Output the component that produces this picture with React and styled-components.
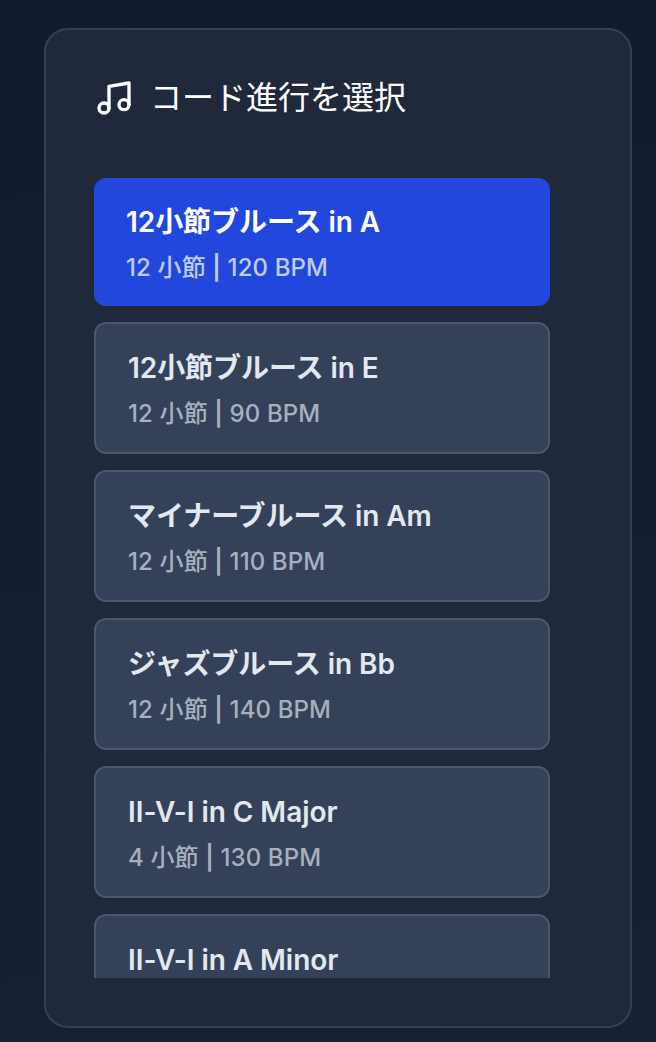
import React from 'react'
import styled, { createGlobalStyle } from 'styled-components'
import { Music } from 'lucide-react'

const GlobalStyle = createGlobalStyle`
  html, body { margin: 0; padding: 0; }
  body {
    background: linear-gradient(175deg, #121a2f 0%, #182034 100%);
    font-family: Inter, "Noto Sans CJK JP", sans-serif;
  }
`

const Page = styled.div`
  width: 656px;
  height: 1042px;
  box-sizing: border-box;
  padding: 28px 24px 14px 44px;
  overflow: hidden;
`

const Panel = styled.section`
  box-sizing: border-box;
  width: 588px;
  height: 1000px;
  padding: 48px 80px 48px 48px;
  display: flex;
  flex-direction: column;
  background: #20293b;
  border: 2px solid #334155;
  border-radius: 24px;
`

const Heading = styled.h2`
  margin: 0 0 60px;
  height: 40px;
  display: flex;
  align-items: center;
  gap: 16px;
  color: #fff;
  font-size: 32px;
  font-weight: 400;
  line-height: 40px;

  svg {
    flex: none;
  }
`

const List = styled.div`
  flex: 1;
  min-height: 0;
  overflow: hidden;
  display: flex;
  flex-direction: column;
  gap: 16px;
`

const Card = styled.button`
  flex: none;
  box-sizing: border-box;
  width: 100%;
  padding: 24px 32px;
  text-align: left;
  font-family: inherit;
  color: ${p => (p.$active ? '#fff' : '#e2e8f0')};
  background: ${p => (p.$active ? '#2247dd' : '#354158')};
  border: ${p => (p.$active ? 'none' : '2px solid #4a566c')};
  border-radius: 12px;
`

const Name = styled.div`
  font-size: 28px;
  font-weight: 600;
  line-height: 40px;
  letter-spacing: -0.06px;
`

const Meta = styled.div`
  margin-top: 12px;
  font-size: 24px;
  font-weight: 500;
  line-height: 28px;
  letter-spacing: 0.12px;
  color: ${p => (p.$active ? '#bfcdf8' : '#a6b0bf')};
`

const Pipe = styled.span`
  font-weight: 600;
`

const progressions = [
  { name: '12小節ブルース in A', bars: '12 小節', bpm: '120 BPM', active: true },
  { name: '12小節ブルース in E', bars: '12 小節', bpm: '90 BPM' },
  { name: 'マイナーブルース in Am', bars: '12 小節', bpm: '110 BPM' },
  { name: 'ジャズブルース in Bb', bars: '12 小節', bpm: '140 BPM' },
  { name: 'II-V-I in C Major', bars: '4 小節', bpm: '130 BPM' },
  { name: 'II-V-I in A Minor', bars: '4 小節', bpm: '130 BPM' },
]

export default function App() {
  return (
    <Page>
      <GlobalStyle />
      <Panel>
        <Heading>
          <Music size={40} strokeWidth={2} />
          コード進行を選択
        </Heading>
        <List>
          {progressions.map(item => (
            <Card key={item.name} $active={item.active}>
              <Name>{item.name}</Name>
              <Meta $active={item.active}>
                {item.bars} <Pipe>|</Pipe> {item.bpm}
              </Meta>
            </Card>
          ))}
        </List>
      </Panel>
    </Page>
  )
}
